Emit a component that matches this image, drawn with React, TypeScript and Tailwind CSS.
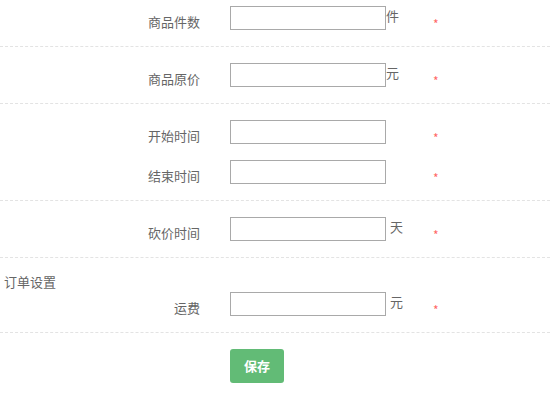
const font = { fontFamily: '"Noto Sans CJK SC", "Microsoft YaHei", sans-serif' };

function Field({ label, unit, gap }: { label: string; unit?: string; gap?: boolean }) {
  return (
    <div className="flex h-6 items-start">
      <div className="w-[200px] shrink-0 pt-[4px] text-right text-[13px] leading-6 text-[#666]">{label}</div>
      <input className="ml-[30px] h-6 w-[156px] shrink-0 border border-[#a9a9a9] bg-white outline-none" />
      <div className={`w-[47px] shrink-0 text-[13px] leading-5 text-[#666] ${gap ? 'pl-1' : ''}`}>{unit}</div>
      <div className="pt-[6px] text-[12px] leading-6 text-[#f66]">*</div>
    </div>
  );
}

export default function App() {
  return (
    <div className="h-[406px] w-[550px] overflow-hidden bg-white" style={font}>
      <div className="border-b border-dashed border-[#e3e3e3] pt-[6px] pb-[16px]">
        <Field label="商品件数" unit="件" />
      </div>
      <div className="border-b border-dashed border-[#e3e3e3] pt-4 pb-[16px]">
        <Field label="商品原价" unit="元" />
      </div>
      <div className="flex flex-col gap-4 border-b border-dashed border-[#e3e3e3] pt-4 pb-4">
        <Field label="开始时间" />
        <Field label="结束时间" />
      </div>
      <div className="border-b border-dashed border-[#e3e3e3] py-4">
        <Field label="砍价时间" unit="天" gap />
      </div>
      <div className="border-b border-dashed border-[#e3e3e3] pb-4">
        <div className="h-[34px] pl-1 pt-[12px] text-[13px] leading-6 text-[#666]">订单设置</div>
        <Field label="运费" unit="元" gap />
      </div>
      <div className="pl-[230px] pt-4">
        <button className="h-[34px] w-[54px] rounded-[3px] bg-[#62bb76] text-[13px] font-bold text-white">保存</button>
      </div>
    </div>
  );
}
